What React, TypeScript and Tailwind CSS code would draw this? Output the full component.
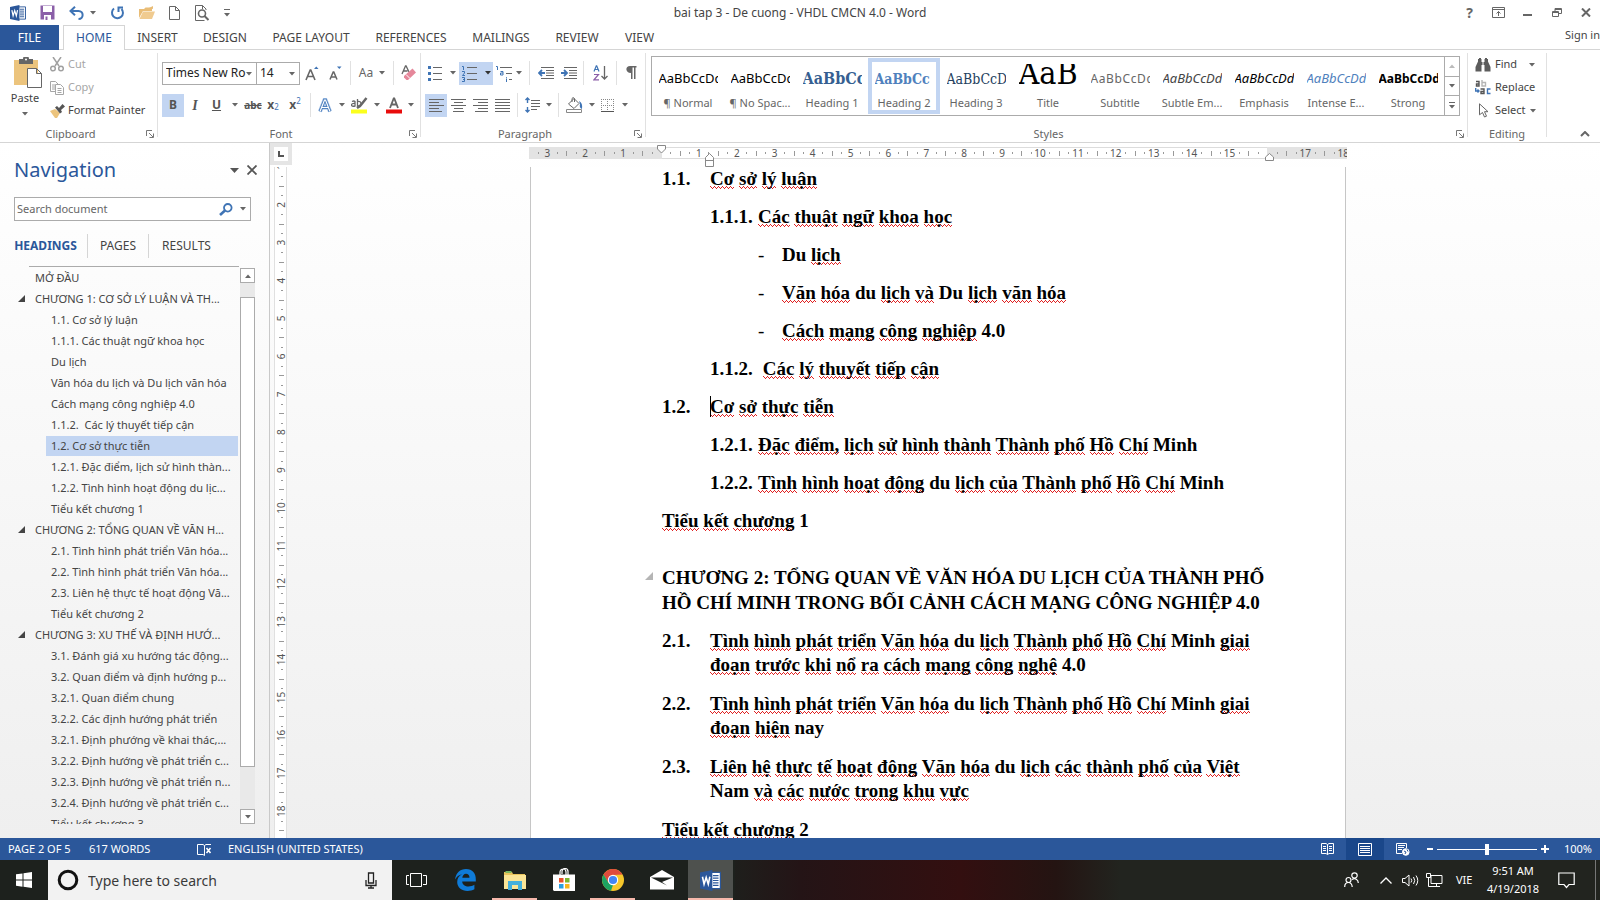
import React from "react";

type Kids = { children?: React.ReactNode };

/* ---------- small shared pieces ---------- */

const Caret = ({ className = "text-[#666]" }: { className?: string }) => (
  <svg width="6" height="4" viewBox="0 0 6 4" className={`shrink-0 ${className}`} aria-hidden="true">
    <path d="M0 0h6L3 3.5z" fill="currentColor" />
  </svg>
);

const Sep = () => <span className="mx-1 h-6 w-px shrink-0 bg-[#e1e1e1]" />;

const Divider = () => <span className="h-[84px] w-px shrink-0 bg-[#e1e1e1]" />;

const Tool = ({ label, className = "w-[22px]", children }: Kids & { label: string; className?: string }) => (
  <button type="button" aria-label={label} className={`flex h-[23px] shrink-0 items-center justify-center ${className}`}>
    {children}
  </button>
);

const Launcher = ({ label }: { label: string }) => (
  <button type="button" aria-label={label} className="absolute right-[3px] bottom-1">
    <svg width="8" height="8" viewBox="0 0 8 8" fill="none" stroke="#777">
      <path d="M.5 6V.5H6M3 3l4 4M7.500 3.500v4h-4" />
    </svg>
  </button>
);

const Group = ({ title, launcher, className, children }: Kids & { title: string; launcher?: boolean; className: string }) => (
  <section className={`relative flex shrink-0 flex-col ${className}`}>
    <div className="min-h-0 flex-1">{children}</div>
    <div className={`text-center text-[11px] leading-4 text-[#666] ${launcher ? "pr-4" : ""}`}>{title}</div>
    {launcher && <Launcher label={`${title} options`} />}
  </section>
);

/* ---------- icons ---------- */

const WordIcon = ({ size = 17 }: { size?: number }) => (
  <svg width={size} height={size} viewBox="0 0 17 17" aria-hidden="true">
    <path d="M9 2h7.500v13H9z" fill="#fff" stroke="#2b579a" />
    <path d="M10.500 4.500h4.500M10.500 6.500h4.500M10.500 8.500h4.500M10.500 10.500h4.500M10.500 12.500h4.500" stroke="#2b579a" />
    <path d="M0 2l10-2v17L0 15z" fill="#2b579a" />
    <path d="M2 5.500l1.300 6 1.700-5.500 1.700 5.500 1.300-6" fill="none" stroke="#fff" strokeWidth="1.300" />
  </svg>
);

const Lines = ({ rows }: { rows: [number, number][] }) => (
  <svg width="15" height="13" viewBox="0 0 15 13" stroke="#666" aria-hidden="true">
    {rows.map(([a, b], i) => (
      <path key={i} d={`M${a} ${i * 3 + 0.5}H${b}`} />
    ))}
  </svg>
);

const AlignLeft: [number, number][] = [[0, 15], [0, 10], [0, 15], [0, 10], [0, 13]];
const AlignCenter: [number, number][] = [[0, 15], [3, 12], [0, 15], [3, 12], [2, 13]];
const AlignRight: [number, number][] = [[0, 15], [5, 15], [0, 15], [5, 15], [2, 15]];
const AlignFull: [number, number][] = [[0, 15], [0, 15], [0, 15], [0, 15], [0, 15]];

const Bullets = () => (
  <svg width="14" height="16" viewBox="0 0 14 16" aria-hidden="true">
    <path d="M0 1h3v3H0zM0 7h3v3H0zM0 13h3v3H0z" fill="#3f74b5" />
    <path d="M5 2.500h9M5 8.500h9M5 14.500h9" stroke="#666" />
  </svg>
);

const Numbering = () => (
  <svg width="15" height="17" viewBox="0 0 15 17" aria-hidden="true">
    <path d="M0 1.500h1.500V5M0 6.500h2.500v1.500L.5 10.500h2.500M0 12.500h2.500v4H0M1 14.500h1.500" stroke="#3f74b5" fill="none" />
    <path d="M5 2.500h10M5 8.500h10M5 14.500h10" stroke="#666" />
  </svg>
);

const Multilevel = () => (
  <svg width="17" height="17" viewBox="0 0 17 17" aria-hidden="true">
    <path d="M0 1.500h1.500V5M4.500 6.500h2.500v3.500H4.500v-2H7M10.500 12v.8M10.500 13.500V17" stroke="#3f74b5" fill="none" />
    <path d="M4 2.500h12M10 8.500h6M13 14.500h3" stroke="#666" />
  </svg>
);

const Indent = ({ out }: { out?: boolean }) => (
  <svg width="16" height="12" viewBox="0 0 16 12" aria-hidden="true">
    <path d="M3 .5h13M8 3.500h8M8 6h8M8 8.500h8M3 11.500h13" stroke="#666" />
    {out ? (
      <path d="M7 6H1M4 3L1 6l3 3" stroke="#3f74b5" strokeWidth="1.800" fill="none" />
    ) : (
      <path d="M0 6h6M3 3l3 3-3 3" stroke="#3f74b5" strokeWidth="1.800" fill="none" />
    )}
  </svg>
);

const Eraser = () => (
  <svg width="16" height="16" viewBox="0 0 16 16" aria-hidden="true">
    <path d="M1 9L4.500 1h.6L8 7M2.500 6h4" stroke="#666" strokeWidth="1.300" fill="none" />
    <path d="M3 11l8.500-7.500L15 7.500 7 15H5.500L3 12.500z" fill="#e5879a" />
    <path d="M5 9.500l4 4" stroke="#fff" />
  </svg>
);

const Binoculars = () => (
  <svg width="16" height="14" viewBox="0 0 16 14" fill="#5c5c5c" aria-hidden="true">
    <path d="M3 1h3.500v3H9.500V1H13v2.500l2.500 5.500v4.500H9.500V7h-3v6.500H.5V9L3 3.500z" />
    <path d="M4 0h2v1.500H4zM10 0h2v1.500h-2z" />
    <path d="M8 4v3" stroke="#fff" />
  </svg>
);

/* ---------- title bar and tabs ---------- */

const TitleBar = () => (
  <header className="grid h-[25px] shrink-0 grid-cols-[1fr_auto_1fr] items-center">
    <div className="flex items-center gap-[14px] pl-[10px]">
      <WordIcon size={16} />
      <button type="button" aria-label="Save">
        <svg width="15" height="15" viewBox="0 0 15 15">
          <path d="M.5.5h14v14H.5z" fill="#8b5fa8" />
          <path d="M3 1h9v6H3z" fill="#fff" />
          <path d="M4 10h7v5H4z" fill="#fff" />
          <path d="M5.500 11.500h2V15h-2z" fill="#8b5fa8" />
        </svg>
      </button>
      <button type="button" aria-label="Undo" className="flex items-center gap-[6px]">
        <svg width="15" height="14" viewBox="0 0 15 14" fill="none" stroke="#3f74b5" strokeWidth="2">
          <path d="M6 .8L1.500 5 6 9.200M2 5h7.500c5.500 0 5.500 8 0 8" />
        </svg>
        <Caret />
      </button>
      <button type="button" aria-label="Redo">
        <svg width="15" height="14" viewBox="0 0 15 14" fill="none" stroke="#3f74b5" strokeWidth="2">
          <path d="M4 2.500A5.500 5.500 0 1 0 11.500 3M8.500 6V1.500H13" />
        </svg>
      </button>
      <button type="button" aria-label="Open">
        <svg width="16" height="13" viewBox="0 0 16 13">
          <path d="M0 12V3h5l1.500-1.500H13V5H4z" fill="#e9bd77" />
          <path d="M4 5.500h12L13 13H.5z" fill="#f0cb90" />
          <path d="M10 2l4-2v3" fill="#e9bd77" />
        </svg>
      </button>
      <button type="button" aria-label="New">
        <svg width="11" height="14" viewBox="0 0 11 14" fill="#fff" stroke="#666">
          <path d="M.5.5h6l4 4v9H.5zM6.500.5v4h4" />
        </svg>
      </button>
      <button type="button" aria-label="Print preview">
        <svg width="16" height="16" viewBox="0 0 16 16" fill="none" stroke="#666">
          <path d="M12 5V4L8.500.5H1.500v15h9M8.500.5V4" />
          <circle cx="8" cy="8.500" r="3.500" strokeWidth="1.600" />
          <path d="M10.500 11l4 4" strokeWidth="2" />
        </svg>
      </button>
      <button type="button" aria-label="Customize toolbar" className="flex flex-col gap-[3px]">
        <span className="h-px w-[6px] bg-[#666]" />
        <Caret />
      </button>
    </div>
    <h1 className="text-[12px] text-[#444]">bai tap 3 - De cuong - VHDL CMCN 4.0 - Word</h1>
    <div className="flex items-center justify-end text-[#666]">
      <button type="button" aria-label="Help" className="w-[29px] text-center text-[14px] leading-4 font-bold">?</button>
      <button type="button" aria-label="Ribbon display options" className="flex w-[29px] justify-center">
        <svg width="13" height="11" viewBox="0 0 13 11" fill="none" stroke="#666">
          <path d="M.5.5h12v10H.5zM.5 2.500h12M6.500 9V4.500M4.500 6.500l2-2 2 2" />
        </svg>
      </button>
      <button type="button" aria-label="Minimize" className="flex w-[29px] justify-center pt-1">
        <span className="h-[2px] w-[9px] bg-[#666]" />
      </button>
      <button type="button" aria-label="Restore" className="flex w-[29px] justify-center">
        <svg width="10" height="9" viewBox="0 0 10 9" fill="none" stroke="#666">
          <path d="M.5 3.500h6v5h-6zM.5 4.500h6M3 3V.5h6.500v5H7M3 1.500h6.500" />
        </svg>
      </button>
      <button type="button" aria-label="Close" className="flex w-[29px] justify-center">
        <svg width="10" height="9" viewBox="0 0 10 9" stroke="#666" strokeWidth="2">
          <path d="M1 .5l8 8M9 .5l-8 8" />
        </svg>
      </button>
    </div>
  </header>
);

const tabs: [string, string][] = [
  ["INSERT", "w-[65px]"],
  ["DESIGN", "w-[70px]"],
  ["PAGE LAYOUT", "w-[102px]"],
  ["REFERENCES", "w-[98px]"],
  ["MAILINGS", "w-[82px]"],
  ["REVIEW", "w-[70px]"],
  ["VIEW", "w-[55px]"],
];

const TabRow = () => (
  <nav className="flex h-[25px] shrink-0 border-b border-[#d5d5d5] text-[12px] text-[#444]">
    <button type="button" className="-mb-px w-[59px] bg-[#2b579a] text-white">FILE</button>
    <button type="button" className="-mb-px ml-1 w-[62px] border border-b-0 border-[#d5d5d5] bg-white text-[#2b579a]">HOME</button>
    {tabs.map(([name, w]) => (
      <button type="button" key={name} className={`${w} pt-px whitespace-nowrap`}>{name}</button>
    ))}
    <a href="#signin" className="-mt-1 ml-auto self-center text-[11px] whitespace-nowrap">Sign in</a>
  </nav>
);

/* ---------- ribbon ---------- */

const ClipboardGroup = () => (
  <Group title="Clipboard" launcher className="w-[157px]">
    <div className="flex">
      <button type="button" className="flex w-[50px] flex-col items-center pt-1 text-[11px] text-[#444]">
        <svg width="29" height="31" viewBox="0 0 29 31" className="ml-1">
          <path d="M1 3h24v25H1z" fill="#ecc47d" />
          <path d="M6 2h4a3 3 0 0 1 6 0h4v5H6z" fill="#666" />
          <circle cx="13" cy="2.500" r="1" fill="#fff" />
          <path d="M14.500 11.500h9l5 5v14h-14zM23.500 11.500v5h5" fill="#fff" stroke="#666" />
        </svg>
        <span className="leading-5">Paste</span>
        <span className="mt-1"><Caret /></span>
      </button>
      <div className="flex flex-col text-[11px] text-[#a6a6a6]">
        <button type="button" className="flex h-[23px] items-center gap-1">
          <svg width="14" height="15" viewBox="0 0 14 15" fill="none" stroke="#a0a0a0" strokeWidth="1.500">
            <path d="M3 0l6 9M11 0L5 9" />
            <circle cx="3" cy="11.500" r="2.300" />
            <circle cx="11" cy="11.500" r="2.300" />
          </svg>
          Cut
        </button>
        <button type="button" className="flex h-[23px] items-center gap-1">
          <svg width="14" height="14" viewBox="0 0 14 14" fill="#fff" stroke="#a6a6a6">
            <path d="M.5.5h5l3 3v7h-8zM2 4h3M2 6h3M2 8h3" />
            <path d="M5.500 3.500h5l3 3v7h-8zM7.500 7.500h4M7.500 9.500h4M7.500 11.500h4" />
          </svg>
          Copy
        </button>
        <button type="button" className="flex h-[23px] items-center gap-[3px] whitespace-nowrap text-[#444]">
          <svg width="15" height="14" viewBox="0 0 15 14">
            <path d="M0 7l5-2 5 4-3 5H5z" fill="#ecc47d" />
            <path d="M5 3.500L7 2l2 2 3.500-4L15 2.500 11 6l1 2-2 1.500z" fill="#555" />
          </svg>
          Format Painter
        </button>
      </div>
    </div>
  </Group>
);

const Picker = ({ label, value, className }: { label: string; value: string; className: string }) => (
  <label className={`relative block h-[23px] border border-[#ababab] ${className}`}>
    <span className="sr-only">{label}</span>
    <select className="block h-[21px] w-full appearance-none bg-white py-0 pl-[3px] text-[12px] leading-5 text-[#222] outline-none" defaultValue={value}>
      <option>{value}</option>
    </select>
    <span className="pointer-events-none absolute top-[9px] right-[4px] flex"><Caret /></span>
  </label>
);

const FontGroup = () => (
  <Group title="Font" launcher className="w-[262px]">
    <div className="flex items-center pt-2 pl-1">
      <Picker label="Font" value="Times New Ro" className="w-[95px]" />
      <Picker label="Font size" value="14" className="-ml-px w-[44px]" />
      <Tool label="Grow font" className="w-6">
        <svg width="14" height="15" viewBox="0 0 14 15" fill="none" stroke="#666" strokeWidth="1.600">
          <path d="M1 14L5.200 4h.6L10 14M2.500 10.500h6" />
          <path d="M9 3h4.500L11.300.5z" fill="#3f74b5" stroke="none" />
        </svg>
      </Tool>
      <Tool label="Shrink font" className="w-[22px]">
        <svg width="13" height="14" viewBox="0 0 13 14" fill="none" stroke="#666" strokeWidth="1.500">
          <path d="M1 13.500L4.200 6h.6L8 13.500M2.500 11h4.500" />
          <path d="M8 .5h4.500L10.300 3z" fill="#3f74b5" stroke="none" />
        </svg>
      </Tool>
      <Sep />
      <Tool label="Change case" className="w-[34px] gap-[6px] text-[12px] text-[#666]">Aa<Caret /></Tool>
      <Sep />
      <Tool label="Clear formatting"><Eraser /></Tool>
    </div>
    <div className="flex items-center pt-2 pl-1 text-[12px] text-[#555]">
      <Tool label="Bold" className="w-[22px] bg-[#c2d5f2] font-bold">B</Tool>
      <Tool label="Italic" className="w-[22px] font-['Liberation_Serif',serif] text-[14px] font-bold italic">I</Tool>
      <Tool label="Underline" className="w-[38px] gap-[11px] font-bold"><span className="underline">U</span><Caret /></Tool>
      <Tool label="Strikethrough" className="w-[18px] text-[10px] font-bold"><span className="line-through">abc</span></Tool>
      <Tool label="Subscript"><b>x</b><sub className="text-[8px] text-[#3f74b5]">2</sub></Tool>
      <Tool label="Superscript"><b>x</b><sup className="text-[8px] text-[#3f74b5]">2</sup></Tool>
      <Sep />
      <Tool label="Text effects" className="w-8 gap-[7px]">
        <svg width="14" height="15" viewBox="0 0 14 15" fill="none">
          <path d="M2 13.500L6.500 2h1L12 13.500M4 9.500h6" stroke="#9dbce4" strokeWidth="4" />
          <path d="M2 13.500L6.500 2h1L12 13.500M4 9.500h6" stroke="#3f74b5" strokeWidth="2.600" />
          <path d="M2 13.500L6.500 2h1L12 13.500M4 9.500h6" stroke="#fff" strokeWidth="1.200" />
        </svg>
        <Caret />
      </Tool>
      <Tool label="Highlight colour" className="w-[36px] gap-[6px]">
        <svg width="17" height="17" viewBox="0 0 17 17" fill="none" stroke="#666">
          <path d="M1 4.500q2-1 3 0v4.500q-3.500.8-3.500-1T4 6.500M6.500 2v7q3.500 0 3.500-2.500T6.500 4.500" strokeWidth="1.300" />
          <path d="M15.500 1L9 9l-3 2" strokeWidth="2.500" />
          <path d="M0 12.500h16v4H0z" fill="#fbff1d" stroke="none" />
        </svg>
        <Caret />
      </Tool>
      <Tool label="Font colour" className="w-[34px] gap-[6px]">
        <svg width="16" height="17" viewBox="0 0 16 17" fill="none">
          <path d="M4 11L7.700 1.500h.6L12 11M5.500 7.500h5" stroke="#666" strokeWidth="1.800" />
          <path d="M0 12.500h16v4H0z" fill="#e80c0c" />
        </svg>
        <Caret />
      </Tool>
    </div>
  </Group>
);

const ParagraphGroup = () => (
  <Group title="Paragraph" launcher className="w-[224px]">
    <div className="flex items-center pt-2 pl-1">
      <Tool label="Bullets" className="w-[34px] gap-2"><Bullets /><Caret /></Tool>
      <Tool label="Numbering" className="w-[34px] gap-2 bg-[#c2d5f2]"><Numbering /><Caret className="text-[#333]" /></Tool>
      <Tool label="Multilevel list" className="w-[32px] gap-[3px]"><Multilevel /><Caret /></Tool>
      <Sep />
      <Tool label="Decrease indent" className="w-6"><Indent out /></Tool>
      <Tool label="Increase indent" className="w-[21px]"><Indent /></Tool>
      <Sep />
      <Tool label="Sort" className="w-6">
        <svg width="15" height="16" viewBox="0 0 15 16" fill="none">
          <path d="M1 6.500L3.300.8h.4L6 6.500M2 4.500h3" stroke="#3f74b5" strokeWidth="1.200" />
          <path d="M1 9.500h4.500L1 14.800h5" stroke="#8b5fa8" strokeWidth="1.200" />
          <path d="M11.500 1v13M8.500 11l3 3 3-3" stroke="#666" strokeWidth="1.300" />
        </svg>
      </Tool>
      <Sep />
      <Tool label="Show paragraph marks" className="w-5">
        <svg width="11" height="14" viewBox="0 0 11 14" fill="#666">
          <path d="M10.500 0v1.500H9.500V13H8V1.500H6.500V13H5V7C-1 7-1 0 4 0z" />
        </svg>
      </Tool>
    </div>
    <div className="flex items-center pt-2 pl-1">
      <Tool label="Align left" className="w-[22px] bg-[#c2d5f2]"><Lines rows={AlignLeft} /></Tool>
      <Tool label="Align centre"><Lines rows={AlignCenter} /></Tool>
      <Tool label="Align right"><Lines rows={AlignRight} /></Tool>
      <Tool label="Justify"><Lines rows={AlignFull} /></Tool>
      <Sep />
      <Tool label="Line spacing" className="w-[32px] gap-[6px]">
        <svg width="15" height="16" viewBox="0 0 15 16" fill="none">
          <path d="M2.500 1v5M.5 3l2-2 2 2M2.500 10v5M.5 13l2 2 2-2" stroke="#3f74b5" strokeWidth="1.400" />
          <path d="M6 3.500h9M6 6.500h9M6 9.500h9M6 12.500h6" stroke="#666" />
        </svg>
        <Caret />
      </Tool>
      <Sep />
      <Tool label="Shading" className="w-[34px] gap-[6px]">
        <svg width="17" height="16" viewBox="0 0 17 16" fill="none" stroke="#666">
          <path d="M2.500 7L8 1.500l5 5L8 11.500zM6 5V1.500Q7-.5 8.500 1.500V5" />
          <path d="M13 4q4 2 3 8-3-1-2-5z" fill="#3f74b5" stroke="none" />
          <path d="M.5 12.500h15v3H.5z" stroke="#888" />
        </svg>
        <Caret />
      </Tool>
      <Tool label="Borders" className="w-[34px] gap-2">
        <svg width="13" height="13" viewBox="0 0 13 13" fill="none" stroke="#888" strokeDasharray="1 1">
          <path d="M0 .5h13M0 6.500h13M.5 0v13M6.500 0v13M12.500 0v13" />
          <path d="M0 12.500h13" stroke="#555" strokeDasharray="none" />
        </svg>
        <Caret />
      </Tool>
    </div>
  </Group>
);

const styleItems: { name: string; cls: string; sample?: string; on?: boolean }[] = [
  { name: "¶ Normal", cls: "text-[13px] text-black" },
  { name: "¶ No Spac...", cls: "text-[13px] text-black" },
  { name: "Heading 1", cls: "font-['DejaVu_Serif_Condensed','Liberation_Serif',serif] text-[16px] font-bold text-[#365f91]", sample: "AaBbCc" },
  { name: "Heading 2", cls: "font-['DejaVu_Serif_Condensed','Liberation_Serif',serif] text-[14px] font-bold text-[#4f81bd]", sample: "AaBbCc", on: true },
  { name: "Heading 3", cls: "font-['DejaVu_Serif_Condensed','Liberation_Serif',serif] text-[14px] text-[#243f60]", sample: "AaBbCcD" },
  { name: "Title", cls: "pb-3 font-['DejaVu_Serif_Condensed','Liberation_Serif',serif] text-[32px] text-black", sample: "AaB" },
  { name: "Subtitle", cls: "text-[12px] tracking-wider text-[#666]" },
  { name: "Subtle Em...", cls: "text-[13px] italic text-[#444]" },
  { name: "Emphasis", cls: "text-[13px] italic text-black" },
  { name: "Intense E...", cls: "text-[13px] italic text-[#4f81bd]" },
  { name: "Strong", cls: "text-[12px] font-bold text-black" },
];

const StylesGroup = () => (
  <Group title="Styles" launcher className="w-[821px]">
    <div className="mt-[3px] ml-[5px] flex h-[60px] w-[809px] border border-[#ababab]">
      {styleItems.map((s) => (
        <button
          type="button"
          key={s.name}
          className={`my-px flex w-[72px] shrink-0 flex-col items-center border-4 ${s.on ? "border-[#c2d5f2]" : "border-transparent"}`}
        >
          <span className={`my-[2px] flex h-[30px] w-[59px] shrink-0 items-center overflow-hidden whitespace-nowrap ${s.cls}`}>{s.sample ?? "AaBbCcDd"}</span>
          <span className="text-[11px] leading-[14px] whitespace-nowrap text-[#666]">{s.name}</span>
        </button>
      ))}
      <div className="flex flex-1 flex-col border-l border-[#ababab]">
        <button type="button" aria-label="Previous styles" className="flex flex-1 items-center justify-center">
          <Caret className="rotate-180 text-[#bbb]" />
        </button>
        <button type="button" aria-label="Next styles" className="flex flex-1 items-center justify-center border-y border-[#ababab]"><Caret /></button>
        <button type="button" aria-label="More styles" className="flex flex-1 flex-col items-center justify-center gap-[2px]">
          <span className="h-px w-[6px] bg-[#666]" />
          <Caret />
        </button>
      </div>
    </div>
  </Group>
);

const EditingGroup = () => (
  <Group title="Editing" className="w-[78px]">
    <div className="flex flex-col pl-[7px] text-[11px] text-[#444]">
      <button type="button" className="flex h-[23px] items-center gap-1"><Binoculars />Find<span className="ml-2"><Caret /></span></button>
      <button type="button" className="flex h-[23px] items-center gap-1">
        <svg width="16" height="15" viewBox="0 0 16 15" fill="none" strokeWidth="1.400">
          <path d="M1 1.500h3V6H1.500V4H4" stroke="#555" />
          <path d="M7 0v6h3.500V2.500H7" stroke="#b5b5b5" />
          <path d="M5.500 9H9v4.500H6v-2h3" stroke="#555" />
          <path d="M15.500 9h-3v4.500h3M.7 8v3h3M2.500 9.500L4 11l-1.500 1.500" stroke="#3f74b5" />
        </svg>
        Replace
      </button>
      <button type="button" className="flex h-[23px] items-center gap-1">
        <svg width="16" height="15" viewBox="0 0 16 15" fill="none" stroke="#666">
          <path d="M4.500.8v11l3-2.300 2 4.500 2-.8-2-4.500h3.500z" />
        </svg>
        Select<Caret />
      </button>
    </div>
  </Group>
);

const Ribbon = () => (
  <div className="flex h-[93px] shrink-0 overflow-hidden border-b border-[#d5d5d5] pt-[3px]">
    <ClipboardGroup />
    <Divider />
    <FontGroup />
    <Divider />
    <ParagraphGroup />
    <Divider />
    <StylesGroup />
    <Divider />
    <EditingGroup />
    <Divider />
    <div className="flex flex-1 items-end justify-end pr-[10px] pb-[5px]">
      <button type="button" aria-label="Collapse the ribbon">
        <svg width="10" height="6" viewBox="0 0 10 6" fill="none" stroke="#666" strokeWidth="2"><path d="M1 5l4-4 4 4" /></svg>
      </button>
    </div>
  </div>
);

/* ---------- navigation pane ---------- */

const headings: { text: string; top?: boolean; on?: boolean; open?: boolean }[] = [
  { text: "MỞ ĐẦU", top: true },
  { text: "CHƯƠNG 1: CƠ SỞ LÝ LUẬN VÀ TH...", top: true, open: true },
  { text: "1.1. Cơ sở lý luận" },
  { text: "1.1.1. Các thuật ngữ khoa học" },
  { text: "Du lịch" },
  { text: "Văn hóa du lịch và Du lịch văn hóa" },
  { text: "Cách mạng công nghiệp 4.0" },
  { text: "1.1.2.\u00a0 Các lý thuyết tiếp cận" },
  { text: "1.2. Cơ sở thực tiễn", on: true },
  { text: "1.2.1. Đặc điểm, lịch sử hình thàn..." },
  { text: "1.2.2. Tình hình hoạt động du lịc..." },
  { text: "Tiểu kết chương 1" },
  { text: "CHƯƠNG 2: TỔNG QUAN VỀ VĂN H...", top: true, open: true },
  { text: "2.1. Tình hình phát triển Văn hóa..." },
  { text: "2.2. Tình hình phát triển Văn hóa..." },
  { text: "2.3. Liên hệ thực tế hoạt động Vă..." },
  { text: "Tiểu kết chương 2" },
  { text: "CHƯƠNG 3: XU THẾ VÀ ĐỊNH HƯỚ...", top: true, open: true },
  { text: "3.1. Đánh giá xu hướng tác động..." },
  { text: "3.2. Quan điểm và định hướng p..." },
  { text: "3.2.1. Quan điểm chung" },
  { text: "3.2.2. Các định hướng phát triển" },
  { text: "3.2.1. Định phướng về khai thác,..." },
  { text: "3.2.2. Định hướng về phát triển c..." },
  { text: "3.2.3. Định hướng về phát triển n..." },
  { text: "3.2.4. Định hướng về phát triển c..." },
  { text: "Tiểu kết chương 3" },
];

const NavigationPane = () => (
  <aside className="flex w-[270px] shrink-0 flex-col border-r border-[#c9c9c9]">
    <div className="flex h-[54px] shrink-0 items-center pr-3 pl-[14px]">
      <h2 className="text-[20px] leading-8 text-[#2b579a]">Navigation</h2>
      <button type="button" aria-label="Pane options" className="mr-2 ml-auto">
        <svg width="9" height="5" viewBox="0 0 9 5"><path d="M0 0h9L4.500 5z" fill="#555" /></svg>
      </button>
      <button type="button" aria-label="Close pane">
        <svg width="10" height="10" viewBox="0 0 10 10" stroke="#555" strokeWidth="1.800"><path d="M.5.5l9 9M9.500.5l-9 9" /></svg>
      </button>
    </div>
    <div className="ml-[14px] flex h-6 w-[237px] shrink-0 items-center border border-[#ababab] bg-white pr-1">
      <input aria-label="Search document" placeholder="Search document" className="min-w-0 flex-1 bg-transparent pl-[2px] text-[11px] outline-none placeholder:text-[#666]" />
      <svg width="14" height="13" viewBox="0 0 14 13" fill="none" stroke="#3f74b5" strokeWidth="1.800">
        <circle cx="8.800" cy="4.800" r="3.800" />
        <path d="M6 7.500L1 12" strokeWidth="2.600" />
      </svg>
      <button type="button" aria-label="Search options" className="ml-[7px]"><Caret /></button>
    </div>
    <div className="mt-[13px] mb-2 flex h-6 shrink-0 text-[12px] text-[#444]">
      <button type="button" className="w-[88px] border-r border-[#d5d5d5] pl-1 font-bold text-[#2b579a]">HEADINGS</button>
      <button type="button" className="w-[61px] border-r border-[#d5d5d5]">PAGES</button>
      <button type="button" className="w-[75px]">RESULTS</button>
    </div>
    <div className="ml-[29px] h-px w-[210px] shrink-0 bg-[#ababab]" />
    <div className="mb-[14px] flex min-h-0 flex-1">
      <ul className="w-[238px] shrink-0 overflow-hidden text-[11px] text-[#444]">
        {headings.map((h, i) => (
          <li key={i} className={`flex h-[21px] items-center whitespace-nowrap ${h.top ? "pl-[18px]" : "pl-[46px]"}`}>
            {h.top && (
              <span className="w-[17px] shrink-0">
                {h.open && <svg width="7" height="7" viewBox="0 0 7 7"><path d="M7 0v7H0z" fill="#444" /></svg>}
              </span>
            )}
            <a href="#heading" className={`block ${h.top ? "" : "flex-1 pl-[5px]"} ${h.on ? "bg-[#c2d5f2]" : ""} leading-5`}>{h.text}</a>
          </li>
        ))}
      </ul>
      <div className="mt-px ml-[2px] flex w-[15px] flex-col bg-[#e9e9e9]">
        <button type="button" aria-label="Scroll up" className="flex h-[15px] items-center justify-center border border-[#ababab] bg-white">
          <Caret className="rotate-180 text-[#666]" />
        </button>
        <div className="flex flex-1 flex-col pt-[14px]">
          <div className="flex-11 border border-[#ababab] bg-white" />
          <div className="flex-1" />
        </div>
        <button type="button" aria-label="Scroll down" className="flex h-[15px] items-center justify-center border border-[#ababab] bg-white"><Caret /></button>
      </div>
    </div>
  </aside>
);

/* ---------- rulers ---------- */

const CM = 37.9;

const HorizontalRuler = () => {
  const zero = 133;
  const marks: React.ReactNode[] = [];
  for (let q = -14; q <= 72; q++) {
    const x = zero + (q * CM) / 4;
    if (x < 1 || x > 817) continue;
    const n = Math.abs(q / 4);
    if (q % 4 === 0) {
      if (q !== 0 && n !== 16) {
        marks.push(<text key={q} x={x - 1} y={14} textAnchor="middle" fontSize="10" fill="#555">{n}</text>);
      }
    } else if (q % 2 === 0) {
      marks.push(<path key={q} d={`M${Math.round(x) - 0.5} 8v5`} stroke="#999" />);
    } else {
      marks.push(<path key={q} d={`M${Math.round(x) - 0.5} 9v2`} stroke="#999" />);
    }
  }
  return (
    <svg width="818" height="24" viewBox="0 0 818 24" className="block" aria-label="Horizontal ruler">
      <path d="M0 4h818v12H0z" fill="#e3e3e3" />
      <path d="M133 4h605v12H133z" fill="#fff" />
      <path d="M133 4.500h605M133 15.500h605" stroke="#dcdcdc" />
      {marks}
      <path d="M128.500 2.500h8v3.500l-4 4-4-4z" fill="#fff" stroke="#888" />
      <path d="M176.500 23.500v-9l4-4 4 4v9zM176.500 17.500h8" fill="#fff" stroke="#888" />
      <path d="M736.500 17.500v-3.500l4-3.500 4 3.500v3.500z" fill="#fff" stroke="#888" />
    </svg>
  );
};

const VerticalRuler = () => {
  const marks: React.ReactNode[] = [];
  for (let q = 4; q <= 75; q++) {
    const y = -38 + (q * CM) / 4;
    if (q % 4 === 0) {
      marks.push(
        <text key={q} x={0} y={0} textAnchor="middle" fontSize="10" fill="#555" transform={`translate(11 ${y}) rotate(-90)`}>{q / 4}</text>
      );
    } else if (q % 2 === 0) {
      marks.push(<path key={q} d={`M5 ${Math.round(y) + 0.5}h5`} stroke="#999" />);
    } else {
      marks.push(<path key={q} d={`M7 ${Math.round(y) + 0.5}h2`} stroke="#999" />);
    }
  }
  return (
    <svg width="14" height="671" viewBox="0 0 14 671" className="ml-1 block" aria-label="Vertical ruler">
      <path d="M1 0h12v671H1z" fill="#fff" />
      <path d="M.5 0v671M12.500 0v671" stroke="#e0e0e0" />
      {marks}
    </svg>
  );
};

/* ---------- document ---------- */

/* Word flagged by the spelling checker. */
const squiggle =
  "[background:linear-gradient(90deg,#e02020_1px,transparent_1px)_0_calc(100%_-_2px)/4px_1px_repeat-x,linear-gradient(90deg,transparent_1px,#e02020_1px)_0_calc(100%_-_1px)/2px_1px_repeat-x,linear-gradient(90deg,transparent_2px,#e02020_2px,#e02020_3px,transparent_3px)_0_100%/4px_1px_repeat-x]";

/* Words the checker accepts. */
const accepted = new Set(["Du", "du", "Minh", "1", "2", "4.0", "nay", "Nam"]);

const Checked = ({ text }: { text: string }) => (
  <>
    {text.split(/(\s+)/).map((w, i) =>
      w === "" || /^\s+$/.test(w) || accepted.has(w) ? (
        <React.Fragment key={i}>{w}</React.Fragment>
      ) : (
        <span key={i} className={squiggle}>{w}</span>
      )
    )}
  </>
);

const Item = ({ num, lines, className = "", numClass = "w-12", caret, plainNum }: { num: string; lines: string[]; className?: string; numClass?: string; caret?: boolean; plainNum?: boolean }) => (
  <div className={`flex ${lines.length > 1 ? "mb-[15px]" : "mb-[14px]"} ${className}`}>
    <span className={`shrink-0 ${numClass} ${plainNum ? "font-normal" : ""}`}>{num}</span>
    <p className="relative whitespace-nowrap">
      {caret && <span className="absolute top-px left-0 h-[21px] w-px bg-black" />}
      {lines.map((l, i) => (
        <React.Fragment key={i}>
          {i > 0 && <br />}
          <Checked text={l} />
        </React.Fragment>
      ))}
    </p>
  </div>
);

const Page = () => (
  <article className="w-[816px] flex-1 overflow-hidden border-x border-[#c6c6c6] bg-white pr-[76px] pl-[131px] font-['Liberation_Serif','Times_New_Roman',serif] text-[19px] leading-6 font-bold text-black">
    <Item num="1.1." lines={["Cơ sở lý luận"]} />
    <Item num="1.1.1." lines={["Các thuật ngữ khoa học"]} className="ml-12" />
    <Item num="-" lines={["Du lịch"]} className="ml-24" numClass="w-6" plainNum />
    <Item num="-" lines={["Văn hóa du lịch và Du lịch văn hóa"]} className="ml-24" numClass="w-6" plainNum />
    <Item num="-" lines={["Cách mạng công nghiệp 4.0"]} className="ml-24" numClass="w-6" plainNum />
    <Item num="1.1.2." lines={["\u00a0Các lý thuyết tiếp cận"]} className="ml-12" />
    <Item num="1.2." lines={["Cơ sở thực tiễn"]} caret />
    <Item num="1.2.1." lines={["Đặc điểm, lịch sử hình thành Thành phố Hồ Chí Minh"]} className="ml-12" />
    <Item num="1.2.2." lines={["Tình hình hoạt động du lịch của Thành phố Hồ Chí Minh"]} className="ml-12" />
    <p><Checked text="Tiểu kết chương 1" /></p>
    <h2 className="relative mt-8 mb-[14px] leading-[25px] whitespace-nowrap">
      <svg width="8" height="8" viewBox="0 0 8 8" className="absolute top-[7px] -left-[17px]"><path d="M8 0v8H0z" fill="#b5b5b5" /></svg>
      CHƯƠNG 2: TỔNG QUAN VỀ VĂN HÓA DU LỊCH CỦA THÀNH PHỐ
      <br />
      HỒ CHÍ MINH TRONG BỐI CẢNH CÁCH MẠNG CÔNG NGHIỆP 4.0
    </h2>
    <Item num="2.1." lines={["Tình hình phát triển Văn hóa du lịch Thành phố Hồ Chí Minh giai", "đoạn trước khi nổ ra cách mạng công nghệ 4.0"]} />
    <Item num="2.2." lines={["Tình hình phát triển Văn hóa du lịch Thành phố Hồ Chí Minh giai", "đoạn hiện nay"]} />
    <Item num="2.3." lines={["Liên hệ thực tế hoạt động Văn hóa du lịch các thành phố của Việt", "Nam và các nước trong khu vực"]} />
    <p><Checked text="Tiểu kết chương 2" /></p>
  </article>
);

const Workspace = () => (
  <main className="flex min-h-0 flex-1 overflow-hidden bg-linear-to-b from-white to-[#efefef]">
    <NavigationPane />
    <div className="flex w-[22px] shrink-0 flex-col overflow-hidden">
      <div className="mb-[2px] h-[22px] w-[22px] shrink-0 bg-[#e5e5e5] p-1">
        <div className="flex h-[14px] w-[14px] items-center justify-center bg-white">
          <svg width="6" height="6" viewBox="0 0 6 6" fill="none" stroke="#555" strokeWidth="2"><path d="M1 0v5h5" /></svg>
        </div>
      </div>
      <VerticalRuler />
    </div>
    <div className="flex min-w-0 flex-1 flex-col items-center overflow-hidden pr-4">
      <div className="h-6 shrink-0"><HorizontalRuler /></div>
      <Page />
    </div>
  </main>
);

/* ---------- status bar ---------- */

const StatusBar = () => (
  <footer className="flex h-[22px] shrink-0 items-center bg-[#2b579a] text-[11px] text-white">
    <span className="w-[81px] pl-2 whitespace-nowrap">PAGE 2 OF 5</span>
    <span className="w-[108px] pl-2 whitespace-nowrap">617 WORDS</span>
    <button type="button" aria-label="Proofing errors" className="w-[39px] pl-2">
      <svg width="15" height="13" viewBox="0 0 15 13" fill="none" stroke="#fff">
        <path d="M7.500 12.500L6 11.500H.5v-10H6l1.500 1 1.500-1h5M7.500 2.500v10" />
        <path d="M9.500 5l4 5M13.500 5l-4 5" strokeWidth="1.600" />
      </svg>
    </button>
    <span className="whitespace-nowrap">ENGLISH (UNITED STATES)</span>
    <div className="ml-auto flex h-full items-center">
      <button type="button" aria-label="Read mode" className="flex w-[38px] justify-center">
        <svg width="13" height="12" viewBox="0 0 13 12" fill="none" stroke="#fff">
          <path d="M.5.5H5l1.500 1L8 .5h4.500v10H8l-1.500 1-1.500-1H.5zM6.500 1.500v10M2 3.500h3M2 5.500h3M2 7.500h3M8 3.500h3M8 5.500h3M8 7.500h3" />
        </svg>
      </button>
      <button type="button" aria-label="Print layout" className="flex h-full w-[38px] items-center justify-center bg-[#1a478a]">
        <svg width="14" height="13" viewBox="0 0 14 13" fill="none" stroke="#fff">
          <path d="M.5.5h13v12H.5zM2 3.500h10M2 5.500h10M2 7.500h10M2 9.500h10" />
        </svg>
      </button>
      <button type="button" aria-label="Web layout" className="flex w-[38px] justify-center">
        <svg width="14" height="13" viewBox="0 0 14 13" fill="none" stroke="#fff">
          <path d="M6 10.500H.5V.5h10V5M2 2.500h7M2 4.500h6M2 6.500h4" />
          <circle cx="9.800" cy="9" r="3.300" fill="#fff" />
          <path d="M8 8l2 1-1 2M11 6.500l1 2" stroke="#2b579a" />
        </svg>
      </button>
      <button type="button" aria-label="Zoom out" className="flex w-[15px] justify-center"><span className="h-[2px] w-[6px] bg-white" /></button>
      <input
        type="range"
        min="10"
        max="190"
        defaultValue="100"
        aria-label="Zoom"
        className="h-px w-[100px] appearance-none bg-white [&::-webkit-slider-thumb]:h-[11px] [&::-webkit-slider-thumb]:w-1 [&::-webkit-slider-thumb]:appearance-none [&::-webkit-slider-thumb]:bg-white"
      />
      <button type="button" aria-label="Zoom in" className="flex w-4 justify-center">
        <svg width="8" height="8" viewBox="0 0 8 8" stroke="#fff" strokeWidth="2"><path d="M0 4h8M4 0v8" /></svg>
      </button>
      <span className="w-[47px] pr-2 text-right">100%</span>
    </div>
  </footer>
);

/* ---------- taskbar ---------- */

const TaskButton = ({ label, running, active, children }: Kids & { label: string; running?: boolean; active?: boolean }) => (
  <button
    type="button"
    aria-label={label}
    className={`mx-[2px] flex h-full w-[45px] items-center justify-center border-y-2 border-t-transparent ${active ? "bg-[#4e514e]" : ""} ${running ? "border-b-[#f6b8ab]" : "border-b-transparent"}`}
  >
    {children}
  </button>
);

const Taskbar = () => (
  <footer className="flex h-10 shrink-0 bg-[linear-gradient(90deg,#1d211d_45%,#241416_50%,#330f10_60%,#241412_66%,#22241f_70%)] text-white">
    <button type="button" aria-label="Start" className="flex w-12 items-center justify-center bg-[#1d211d]">
      <svg width="16" height="16" viewBox="0 0 16 16" fill="#fff"><path d="M0 2.300L6.500 1.400v6.200H0zM7.500 1.200L16 0v7.600H7.500zM0 8.500h6.500v6.200L0 13.800zM7.500 8.500H16V16l-8.500-1.200z" /></svg>
    </button>
    <div className="flex w-[344px] items-center bg-[#f2f2f2] pr-[14px] pl-[9px]">
      <svg width="22" height="22" viewBox="0 0 22 22" fill="none" stroke="#111" strokeWidth="3"><circle cx="11" cy="11" r="8.800" /></svg>
      <input aria-label="Type here to search" placeholder="Type here to search" className="min-w-0 flex-1 bg-transparent pl-[9px] text-[14px] outline-none placeholder:text-[#3a3a3a]" />
      <svg width="13" height="17" viewBox="0 0 13 17" fill="none" stroke="#222" strokeWidth="1.300">
        <path d="M3.500 1h5v10h-5zM1 8v5.500h10V8M6 13.500V16M3 16h6" />
      </svg>
    </div>
    <div className="flex bg-[#1d211d]">
      <TaskButton label="Task view">
        <svg width="21" height="14" viewBox="0 0 21 14" fill="none" stroke="#fff"><path d="M4.500.5h11v13h-11zM3 2.500H.5v9H3M17 2.500h3.500v9H17" /></svg>
      </TaskButton>
      <TaskButton label="Edge">
        <svg width="21" height="22" viewBox="0 0 21 22" fill="#0f7bd8">
          <path d="M0 10.500C1 4 5 0 11 0c6.500 0 10 4.500 9.800 10.300V12.500H7.200c.2 3.200 3 5 6.200 5 2.300 0 4.400-.7 6-1.700v4.500C17.500 21.500 15 22 12.500 22 6.500 22 2.200 18.200 2.200 13c0-3.500 1.800-6.300 5-7.700C3.800 5.800 1.500 8 0 10.500zM7.300 8.700h7.200C14.500 6 13 4.700 11 4.700S7.500 6.500 7.300 8.700z" />
        </svg>
      </TaskButton>
      <TaskButton label="File Explorer" running>
        <svg width="22" height="19" viewBox="0 0 22 19">
          <path d="M0 1h8l1 2h12v15H0z" fill="#e9c45c" />
          <path d="M1.500 0h6v2h-6z" fill="#7bb661" />
          <path d="M0 4h22v14H0z" fill="#fbe596" />
          <path d="M4 10h14v9h-4v-5H8v5H4z" fill="#45b0dc" />
        </svg>
      </TaskButton>
      <TaskButton label="Store">
        <svg width="24" height="24" viewBox="0 0 24 24">
          <path d="M8 7V4a3 3 0 0 1 6 0v3M10 6V3.500a3 3 0 0 1 6 0V7" fill="none" stroke="#fff" strokeWidth="1.200" />
          <path d="M1 6.500h22V23H2l-1-1z" fill="#fff" />
          <path d="M7 10h4.500v4.500H7z" fill="#e8502b" />
          <path d="M13 10h4.500v4.500H13z" fill="#7cb62f" />
          <path d="M7 16h4.500v4.500H7z" fill="#2a9fe0" />
          <path d="M13 16h4.500v4.500H13z" fill="#f7b51e" />
        </svg>
      </TaskButton>
      <TaskButton label="Chrome" running>
        <svg width="22" height="22" viewBox="0 0 22 22">
          <circle cx="11" cy="11" r="11" fill="#f6c72b" />
          <path d="M1.500 5.500A11 11 0 0 1 20.500 5.500L11 6 6.300 13.800z" fill="#de4b3c" />
          <path d="M1.500 5.500L6.500 13.800 11 16l-2 5.800A11 11 0 0 1 1.500 5.500z" fill="#1da362" />
          <circle cx="11" cy="11" r="5.200" fill="#fff" />
          <circle cx="11" cy="11" r="4.100" fill="#4285f4" />
        </svg>
      </TaskButton>
      <TaskButton label="Mail">
        <svg width="24" height="20" viewBox="0 0 24 20"><path d="M0 7L12 0l12 7v12.500H0z" fill="#fff" /><path d="M1 7.500h22L12 12l5 3.500L1 7.500z" fill="#1d211d" /></svg>
      </TaskButton>
      <TaskButton label="Word" running active><WordIcon size={21} /></TaskButton>
    </div>
    <div className="ml-auto flex items-center text-[11px]">
      <button type="button" aria-label="People" className="w-9">
        <svg width="15" height="16" viewBox="0 0 15 16" fill="none" stroke="#fff" strokeWidth="1.200">
          <circle cx="10.500" cy="3.500" r="2.700" /><circle cx="4.500" cy="8" r="2.500" /><path d="M.7 15c0-6 7.500-6 7.500 0M8 7.500c3-2 6.300 0 6.300 3.500" />
        </svg>
      </button>
      <button type="button" aria-label="Hidden icons" className="w-[22px]">
        <svg width="12" height="7" viewBox="0 0 12 7" fill="none" stroke="#fff" strokeWidth="1.300"><path d="M.5 6.500L6 1l5.500 5.500" /></svg>
      </button>
      <button type="button" aria-label="Volume" className="w-6">
        <svg width="17" height="13" viewBox="0 0 17 13" fill="none" stroke="#fff"><path d="M.5 4.500H3L7 1v11L3 8.500H.5zM9 4.500q1.500 2 0 4M11.500 3q2.500 3.500 0 7M14 1.500q3.500 5 0 10" /></svg>
      </button>
      <button type="button" aria-label="Network" className="w-[30px]">
        <svg width="17" height="15" viewBox="0 0 17 15" fill="none" stroke="#fff"><path d="M5 2.500h11v8H5zM10.500 10.500v3M7 13.500h7M.5.5h4v4h-4zM2.500 5v8.500H7" /></svg>
      </button>
      <span className="w-[27px]">VIE</span>
      <div className="w-[60px] text-center leading-[18px]">
        <div>9:51 AM</div>
        <div>4/19/2018</div>
      </div>
      <button type="button" aria-label="Notifications" className="flex w-[38px] justify-center pl-2">
        <svg width="17" height="17" viewBox="0 0 17 17" fill="none" stroke="#fff" strokeWidth="1.200"><path d="M.8 1h15.400v11.500H11L8.500 15.500 6 12.500H.8z" /></svg>
      </button>
      <span className="mr-1 ml-[14px] h-10 w-px bg-[#777]" />
    </div>
  </footer>
);

export default function App() {
  return (
    <div className="flex h-screen flex-col overflow-hidden bg-white font-['Noto_Sans','Segoe_UI',sans-serif]">
      <TitleBar />
      <TabRow />
      <Ribbon />
      <Workspace />
      <StatusBar />
      <Taskbar />
    </div>
  );
}
